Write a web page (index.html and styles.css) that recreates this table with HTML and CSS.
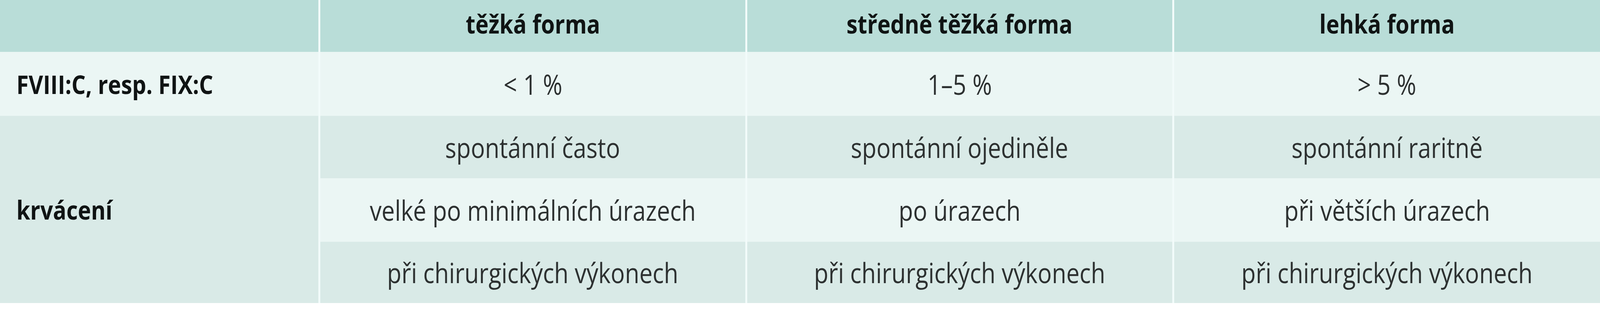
FILE: index.html
```html
<!DOCTYPE html>
<html lang="cs">
<head>
<meta charset="utf-8">
<title>Formy hemofilie</title>
<link rel="stylesheet" href="styles.css">
</head>
<body>
<table class="grid">
  <colgroup>
    <col class="c-label">
    <col class="c-val">
    <col class="c-val">
    <col class="c-val">
  </colgroup>
  <thead>
    <tr class="r-head">
      <th></th>
      <th><span class="t">těžká forma</span></th>
      <th><span class="t">středně těžká forma</span></th>
      <th><span class="t">lehká forma</span></th>
    </tr>
  </thead>
  <tbody>
    <tr class="r-light r-factor">
      <th class="label"><span class="t">FVIII:C, resp. FIX:C</span></th>
      <td><span class="t">&lt; 1 %</span></td>
      <td><span class="t">1–5 %</span></td>
      <td><span class="t">&gt; 5 %</span></td>
    </tr>
    <tr class="r-dark r-a">
      <th class="label label-dark" rowspan="3"><span class="t">krvácení</span></th>
      <td><span class="t">spontánní často</span></td>
      <td><span class="t">spontánní ojediněle</span></td>
      <td><span class="t">spontánní raritně</span></td>
    </tr>
    <tr class="r-light r-b">
      <td><span class="t">velké po minimálních úrazech</span></td>
      <td><span class="t">po úrazech</span></td>
      <td><span class="t">při větších úrazech</span></td>
    </tr>
    <tr class="r-dark r-c">
      <td><span class="t">při chirurgických výkonech</span></td>
      <td><span class="t">při chirurgických výkonech</span></td>
      <td><span class="t">při chirurgických výkonech</span></td>
    </tr>
  </tbody>
</table>
</body>
</html>
```

FILE: styles.css
```css
html, body {
  margin: 0;
  padding: 0;
  background: #ffffff;
}

body {
  font-family: "Open Sans", "Noto Sans", sans-serif;
  color: #2a2d2d;
}

.grid {
  width: 100%;
  table-layout: fixed;
  border-collapse: collapse;
  border-spacing: 0;
}

.c-label { width: 19.96%; }
.c-val { width: 26.68%; }

.grid th,
.grid td {
  padding: 0;
  text-align: center;
  vertical-align: middle;
  line-height: 1;
  white-space: nowrap;
  border-left: 0.145vw solid #f2fbfa;
  border-right: 0.145vw solid #f2fbfa;
}

.grid tr > :first-child { border-left: none; }
.grid tr > :last-child { border-right: none; }

/* glyphs are set slightly narrow, like the original condensed face */
.t {
  display: inline-block;
  transform: scaleX(0.85);
  transform-origin: 50% 50%;
}

.grid td {
  font-size: 71px;
  font-weight: 400;
  color: #2d3131;
}

.r-head th {
  background: #b9ddd8;
  font-size: 67px;
  font-weight: 700;
  color: #101414;
  height: 133px;
  padding-bottom: 12px;
  box-sizing: border-box;
}

.label {
  text-align: left !important;
  padding-left: 1.035vw !important;
  font-size: 67px;
  font-weight: 700;
  color: #101414;
}

.label .t { transform-origin: 0 50%; }

.r-light > * { background: #ebf6f4; }
.r-dark > * { background: #d9eae7; }
.label-dark { background: #d9eae7 !important; }

.r-factor > * { height: 164px; }
.r-a > * { height: 160px; }
.r-b > * { height: 163px; }
.r-c > * { height: 157px; }
```
